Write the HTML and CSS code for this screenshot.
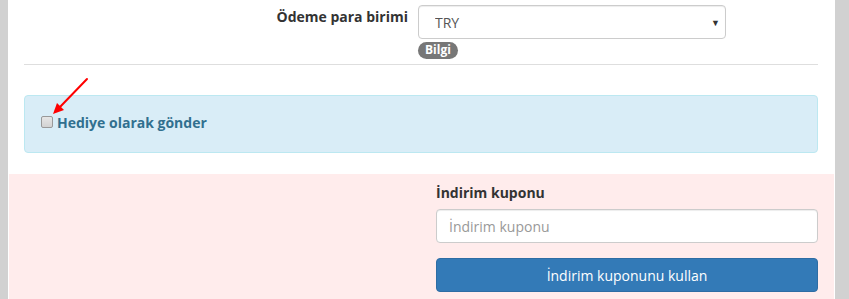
FILE: index.html
```html
<!DOCTYPE html>
<html lang="tr">
<head>
  <meta charset="UTF-8">
  <title>Ödeme</title>
  <link rel="stylesheet" href="styles.css">
</head>
<body>

<div class="page">
  <div class="inner">
    <div class="form-row">
      <label class="row-label" for="currency">Ödeme para birimi</label>
      <div class="row-control">
        <div class="select-wrap">
          <select id="currency" class="form-control">
            <option>TRY</option>
          </select>
          <span class="caret">▼</span>
        </div>
        <span class="badge">Bilgi</span>
      </div>
    </div>

    <hr>

    <div class="alert-info">
      <label class="gift"><input type="checkbox"> Hediye olarak gönder</label>
    </div>
  </div>

  <section class="coupon">
    <div class="coupon-box">
      <label class="coupon-label" for="coupon">İndirim kuponu</label>
      <input type="text" id="coupon" class="form-control" placeholder="İndirim kuponu">
      <button class="btn-primary">İndirim kuponunu kullan</button>
    </div>
  </section>

  <!-- red pointer drawn over the checkbox -->
  <svg class="pointer" width="50" height="50" viewBox="0 0 50 50">
    <line x1="39" y1="2" x2="11" y2="31" stroke="#f00" stroke-width="2" stroke-linecap="round"/>
    <polygon points="5,37 9,26 16,33" fill="#f00"/>
  </svg>
</div>

</body>
</html>
```

FILE: styles.css
```css
* { box-sizing: border-box; }
body {
  margin: 0;
  background: #d1d1d1;
  font-family: 'Open Sans', 'Liberation Sans', sans-serif;
  font-size: 14px;
  line-height: 20px;
  color: #333;
  overflow: hidden;
}
.page {
  position: relative;
  margin: 0 14px 0 8px;
  height: 299px;
  background: #fff;
}
.inner {
  padding: 5px 17px 0 16px;
}
.form-row {
  display: grid;
  grid-template-columns: 384px 308px;
  column-gap: 10px;
}
.row-label {
  text-align: right;
  font-weight: 700;
  padding-top: 2px;
}
.form-control {
  display: block;
  width: 100%;
  height: 34px;
  padding: 6px 12px;
  font-family: inherit;
  font-size: 14px;
  color: #555;
  background: #fff;
  border: 1px solid #ccc;
  border-radius: 4px;
  box-shadow: inset 0 1px 1px rgba(0,0,0,0.075);
}
.select-wrap {
  position: relative;
}
.select-wrap select {
  appearance: none;
  -webkit-appearance: none;
  padding-left: 16px;
}
.caret {
  position: absolute;
  right: 6px;
  top: 8px;
  font-size: 9px;
  color: #333;
  pointer-events: none;
}
.badge {
  display: inline-block;
  margin-top: 2px;
  padding: 1px 7px 2px;
  font-size: 12px;
  font-weight: 700;
  line-height: 14px;
  color: #fff;
  background: #777;
  border-radius: 10px;
}
hr {
  margin: 5px 0 30px;
  border: 0;
  border-top: 1px solid #dedede;
}
.alert-info {
  height: 58px;
  padding: 17px 15px;
  background: #d9edf7;
  border: 1px solid #bce8f1;
  border-radius: 4px;
}
.gift {
  display: flex;
  align-items: center;
  gap: 4px;
  font-weight: 700;
  color: #31708f;
}
.gift input {
  appearance: none;
  -webkit-appearance: none;
  width: 12px;
  height: 12px;
  margin: 0 0 2px 1px;
  border: 1px solid #999;
  border-radius: 2px;
  background: linear-gradient(#e6e6e6, #d2d2d2);
}
.coupon {
  margin: 21px 1px 0;
  height: 125px;
  background: #ffecec;
  padding: 9px 16px 0 0;
  display: flex;
  justify-content: flex-end;
}
.coupon-box {
  width: 382px;
}
.coupon-label {
  display: block;
  font-weight: 700;
  margin-bottom: 6px;
}
.coupon-box input::placeholder {
  color: #999;
}
.btn-primary {
  display: block;
  width: 100%;
  height: 34px;
  margin-top: 15px;
  font-family: inherit;
  font-size: 14px;
  color: #fff;
  background: #337ab7;
  border: 1px solid #2e6da4;
  border-radius: 4px;
}
.pointer {
  position: absolute;
  left: 40px;
  top: 77px;
}
```
